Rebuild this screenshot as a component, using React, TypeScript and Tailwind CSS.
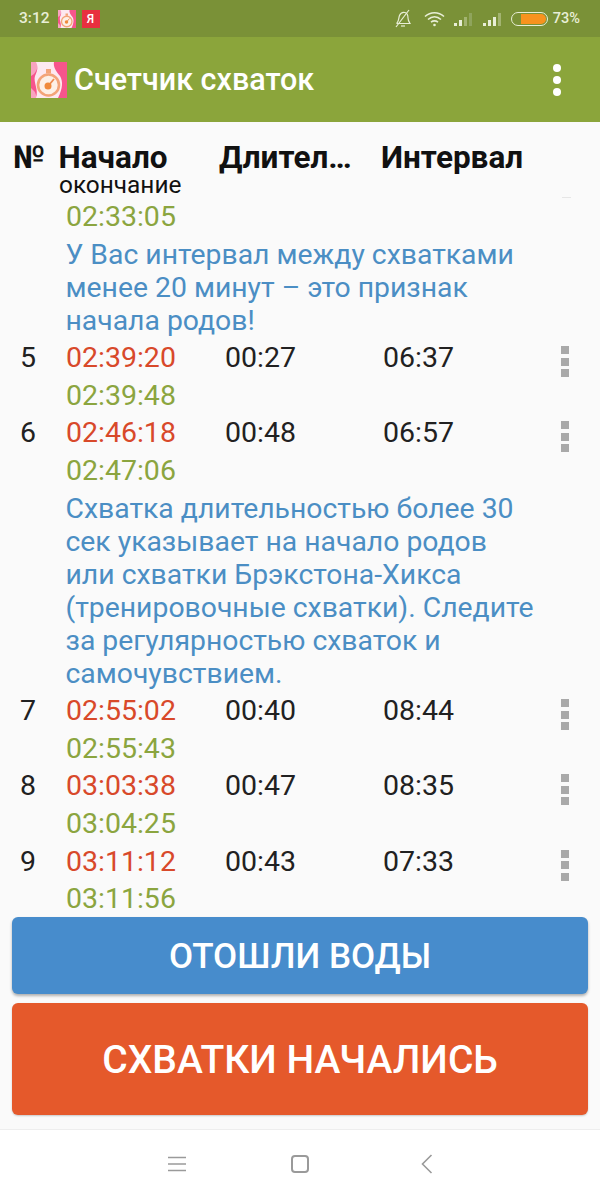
const GREEN = "text-[#8ba53f]";

function AppIcon({ size }: { size: number }) {
  return (
    <svg width={size} height={size} viewBox="0 0 36 36" className="shrink-0">
      <rect width="36" height="36" fill="#f7558c" />
      <path d="M0 0H6C8 4 6 8 3 12L0 14Z" fill="#f9a3c0" />
      <path d="M0 26L4 30L6 36H0Z" fill="#f9a3c0" />
      <path d="M5 0H23C22 5 25 9 29 14C32 19 32 26 27 36H5C8 28 2 20 4 14C7 8 7 4 5 0Z" fill="#fde9f0" />
      <circle cx="17.500" cy="23" r="10.500" fill="#fdf0e6" stroke="#f3a478" strokeWidth="2.600" />
      <rect x="15" y="7" width="5" height="4.500" fill="#f3a478" />
      <path d="M18 23L23 17" stroke="#ee8a50" strokeWidth="1.800" />
      <circle cx="17" cy="24" r="3.500" fill="#f08a3c" />
    </svg>
  );
}

function StatusBar() {
  return (
    <div className="h-[37px] bg-[#7a9137] flex items-center pl-[19px] pr-[20px] text-[#e8eed6] font-medium shrink-0">
      <span className="text-[15.500px]">3:12</span>
      <div className="ml-[8px]"><AppIcon size={18} /></div>
      <div className="ml-[6px] w-[18px] h-[18px] bg-[#e8303f] flex items-center justify-center text-white text-[12px] leading-none">Я</div>
      <div className="ml-auto flex items-center">
        <svg width="18" height="20" viewBox="0 0 18 20" fill="none" stroke="#e8eed6" strokeWidth="1.200">
          <path d="M3 14C5 12 4.500 9 5.500 6.500C6.500 4 9 3 11 3.500C13.500 4.200 14 7 14 9C14 11 15 13 16 14.500H3Z" />
          <path d="M7 17H11" />
          <path d="M2 18L15 1" />
        </svg>
        <svg className="ml-[12px]" width="21" height="16" viewBox="0 0 21 16" fill="none" stroke="#e8eed6" strokeWidth="1.600">
          <path d="M1 5.500C6.500 0.500 14.500 0.500 20 5.500" />
          <path d="M4 8.500C8 5 13 5 17 8.500" />
          <path d="M7 11.200C9 9.700 12 9.700 14 11.200" />
          <circle cx="10.500" cy="14" r="1.300" fill="#e8eed6" stroke="none" />
        </svg>
        <svg className="ml-[9px]" width="20" height="14" viewBox="0 0 20 14">
          <rect x="0" y="11" width="3" height="3" fill="#e8eed6" />
          <rect x="5" y="8" width="3" height="6" fill="#e8eed6" />
          <rect x="10" y="5" width="3" height="9" fill="#a3b471" />
          <rect x="15" y="1" width="3" height="13" fill="#8fa45c" />
        </svg>
        <svg className="ml-[9px]" width="20" height="14" viewBox="0 0 20 14">
          <rect x="0" y="11" width="3" height="3" fill="#e8eed6" />
          <rect x="5" y="8" width="3" height="6" fill="#e8eed6" />
          <rect x="10" y="5" width="3" height="9" fill="#e8eed6" />
          <rect x="15" y="1" width="3" height="13" fill="#a3b471" />
        </svg>
        <div className="ml-[8px] w-[37px] h-[14px] rounded-full border border-[#e8eed6] p-[1px] flex justify-end">
          <div className="w-[25px] h-full rounded-r-full bg-[#f7931e]" />
        </div>
        <span className="ml-[5px] text-[14.500px]">73%</span>
      </div>
    </div>
  );
}

function AppBar() {
  return (
    <div className="h-[85px] bg-[#8ba53b] flex items-center pl-[31px] pr-[39px] shrink-0">
      <AppIcon size={36} />
      <span className="ml-[7px] text-white text-[30.500px] font-medium">Счетчик схваток</span>
      <div className="ml-auto flex flex-col gap-[4px]">
        <div className="w-[8px] h-[8px] rounded-full bg-white" />
        <div className="w-[8px] h-[8px] rounded-full bg-white" />
        <div className="w-[8px] h-[8px] rounded-full bg-white" />
      </div>
    </div>
  );
}

function Dots() {
  return (
    <div className="flex flex-col gap-[3.500px]">
      <div className="w-[8px] h-[8px] bg-[#a9a9a9]" />
      <div className="w-[8px] h-[8px] bg-[#a9a9a9]" />
      <div className="w-[8px] h-[8px] bg-[#a9a9a9]" />
    </div>
  );
}

function Row({ n, start, end, dur, int }: { n: string; start: string; end: string; dur: string; int: string }) {
  return (
    <div className="flex text-[28.500px] leading-[37.600px] text-[#212121]">
      <div className="w-[66px] pl-[20px]">{n}</div>
      <div className="w-[159px]">
        <div className="text-[#d8492a]">{start}</div>
        <div className={GREEN}>{end}</div>
      </div>
      <div className="w-[158px]">{dur}</div>
      <div className="w-[178px]">{int}</div>
      <div className="pt-[7px]"><Dots /></div>
    </div>
  );
}

function Msg({ lines }: { lines: string[] }) {
  return (
    <div className="pl-[65.500px] text-[28.350px] leading-[33px] text-[#4b8ec4] py-[2.300px]">
      {lines.map((l) => (
        <div key={l} className="whitespace-nowrap">{l}</div>
      ))}
    </div>
  );
}

export default function App() {
  return (
    <div className="w-[600px] h-[1199px] flex flex-col bg-[#fafafa] overflow-hidden font-['Roboto',sans-serif]">
      <StatusBar />
      <AppBar />
      <div className="h-[74px] flex text-[#111] shrink-0 relative">
        <div className="w-[58.500px] pl-[13px] pt-[17px] text-[31.500px] leading-[38px] font-bold">№</div>
        <div className="w-[160.500px]">
          <div className="pt-[19px] text-[31.500px] leading-[34px] font-bold">Начало</div>
          <div className="pl-[0.500px] text-[24.400px] leading-[19px]">окончание</div>
        </div>
        <div className="w-[162px] pt-[17px] text-[31.500px] leading-[38px] font-bold">Длител…</div>
        <div className="pt-[17px] text-[31.500px] leading-[38px] font-bold">Интервал</div>
        <div className="absolute right-[29px] top-[75px] w-[9px] h-[1px] bg-[#e6e6e6]" />
      </div>
      <div className="h-[721px] overflow-hidden shrink-0 pt-[2px]">
        <div className={`pl-[66px] text-[28.500px] leading-[37.600px] ${GREEN}`}>02:33:05</div>
        <Msg lines={["У Вас интервал между схватками", "менее 20 минут – это признак", "начала родов!"]} />
        <Row n="5" start="02:39:20" end="02:39:48" dur="00:27" int="06:37" />
        <Row n="6" start="02:46:18" end="02:47:06" dur="00:48" int="06:57" />
        <Msg lines={["Схватка длительностью более 30", "сек указывает на начало родов", "или схватки Брэкстона-Хикса", "(тренировочные схватки). Следите", "за регулярностью схваток и", "самочувствием."]} />
        <Row n="7" start="02:55:02" end="02:55:43" dur="00:40" int="08:44" />
        <Row n="8" start="03:03:38" end="03:04:25" dur="00:47" int="08:35" />
        <Row n="9" start="03:11:12" end="03:11:56" dur="00:43" int="07:33" />
      </div>
      <div className="px-[12px] flex flex-col gap-[9px] shrink-0">
        <button className="h-[77px] rounded-[6px] bg-[#478ccc] text-white text-[35px] font-medium shadow-[0_2px_3px_rgba(0,0,0,0.3)] pt-[3px]">ОТОШЛИ ВОДЫ</button>
        <button className="h-[112px] rounded-[6px] bg-[#e5592b] text-white text-[39px] font-medium shadow-[0_1px_2px_rgba(0,0,0,0.2)] pt-[2px]">СХВАТКИ НАЧАЛИСЬ</button>
      </div>
      <div className="mt-[14px] flex-1 bg-white border-t border-[#eeeeee] flex items-center pb-[2px]">
        <div className="pl-[168px] flex items-center">
          <svg width="18" height="16" viewBox="0 0 18 16" stroke="#9a9a9a" strokeWidth="1.500">
            <path d="M0 1.500H18M0 8H18M0 14.500H18" />
          </svg>
          <svg className="ml-[105px]" width="18" height="18" viewBox="0 0 18 18" fill="none" stroke="#9a9a9a" strokeWidth="2">
            <rect x="1" y="1" width="16" height="16" rx="3" />
          </svg>
          <svg className="ml-[112px]" width="12" height="20" viewBox="0 0 12 20" fill="none" stroke="#9a9a9a" strokeWidth="1.600">
            <path d="M10.500 1L1.500 10L10.500 19" />
          </svg>
        </div>
      </div>
    </div>
  );
}
